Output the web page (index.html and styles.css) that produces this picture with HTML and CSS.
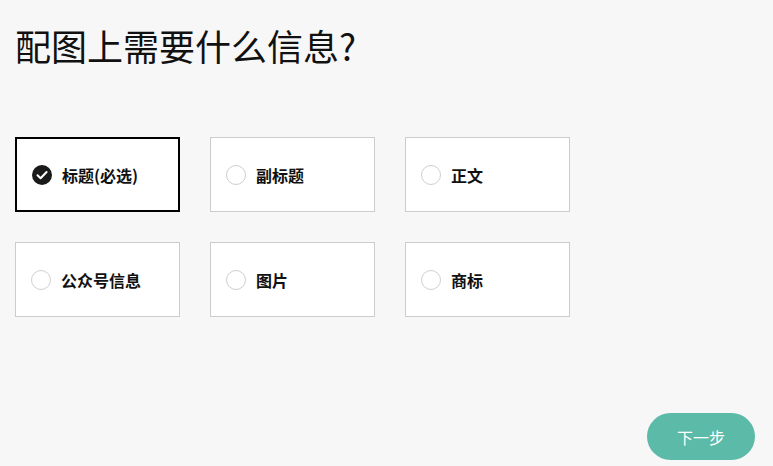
FILE: index.html
```html
<!DOCTYPE html>
<html lang="zh">
<head>
<meta charset="utf-8">
<link rel="stylesheet" href="styles.css">
</head>
<body>
<div class="page">
  <h1 class="title">配图上需要什么信息?</h1>
  <div class="grid">
    <div class="card selected">
      <svg class="check" viewBox="0 0 20 20" width="20" height="20"><circle cx="10" cy="10" r="10" fill="#1a1a1a"/><path d="M5.5 10.3 L8.6 13.3 L14.6 7" fill="none" stroke="#fff" stroke-width="2" stroke-linecap="round" stroke-linejoin="round"/></svg>
      <span class="label">标题(必选)</span>
    </div>
    <div class="card"><span class="radio"></span><span class="label">副标题</span></div>
    <div class="card"><span class="radio"></span><span class="label">正文</span></div>
    <div class="card"><span class="radio"></span><span class="label">公众号信息</span></div>
    <div class="card"><span class="radio"></span><span class="label">图片</span></div>
    <div class="card"><span class="radio"></span><span class="label">商标</span></div>
  </div>
  <div class="footer"><button class="next">下一步</button></div>
</div>
</body>
</html>
```

FILE: styles.css
```css
html, body {
  margin: 0;
  padding: 0;
  background: #f7f7f7;
  font-family: "Noto Sans CJK SC", "Noto Sans", sans-serif;
}
.page {
  width: 773px;
  height: 466px;
  box-sizing: border-box;
  padding: 20px 18px 0 15px;
  display: flex;
  flex-direction: column;
}
.title {
  margin: 0;
  font-size: 36px;
  font-weight: 400;
  line-height: 50px;
  color: #111;
}
.grid {
  margin-top: 67px;
  display: grid;
  grid-template-columns: repeat(3, 165px);
  grid-auto-rows: 75px;
  gap: 30px;
}
.card {
  box-sizing: border-box;
  background: #fff;
  border: 1px solid #cccccc;
  display: flex;
  align-items: center;
  padding-left: 15px;
}
.card.selected {
  border: 2px solid #000;
  padding-left: 15px;
}
.radio, .check {
  width: 20px;
  height: 20px;
  flex: none;
  box-sizing: border-box;
}
.radio {
  border: 1px solid #cfcfcf;
  border-radius: 50%;
  background: #fff;
}
.label {
  margin-left: 10px;
  font-size: 16px;
  font-weight: 700;
  color: #111;
}
.footer {
  margin-top: auto;
  display: flex;
  justify-content: flex-end;
  padding-bottom: 6px;
}
.next {
  width: 108px;
  height: 47px;
  border: none;
  border-radius: 24px;
  background: #5bbaa8;
  color: #fff;
  font-family: "Noto Sans CJK SC", sans-serif;
  font-size: 16px;
  cursor: pointer;
}
```
